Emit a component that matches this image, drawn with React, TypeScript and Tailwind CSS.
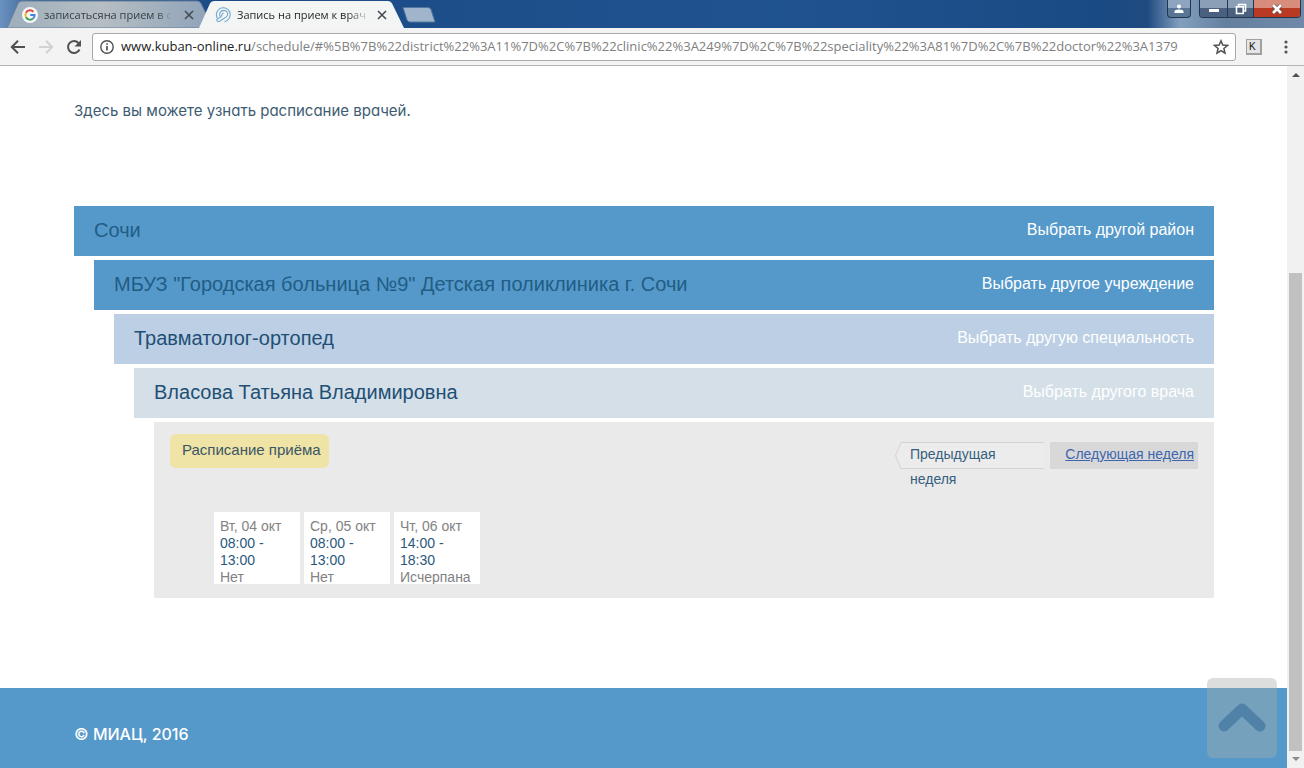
import React from "react";

type Crumb = { title: string; action: string; row: string; titleColor: string };

const crumbs: Crumb[] = [
  { title: "Сочи", action: "Выбрать другой район", row: "bg-[#5599ca]", titleColor: "text-[#215d85]" },
  { title: 'МБУЗ "Городская больница №9" Детская поликлиника г. Сочи', action: "Выбрать другое учреждение", row: "ml-5 bg-[#5599ca]", titleColor: "text-[#215d85]" },
  { title: "Травматолог-ортопед", action: "Выбрать другую специальность", row: "ml-10 bg-[#bccfe4]", titleColor: "text-[#1f4f76]" },
  { title: "Власова Татьяна Владимировна", action: "Выбрать другого врача", row: "ml-15 bg-[#d4dfe7]", titleColor: "text-[#1f4f76]" },
];

const days = [
  { date: "Вт, 04 окт", from: "08:00", to: "13:00", status: "Нет" },
  { date: "Ср, 05 окт", from: "08:00", to: "13:00", status: "Нет" },
  { date: "Чт, 06 окт", from: "14:00", to: "18:30", status: "Исчерпана" },
];

function CloseIcon() {
  return (
    <svg viewBox="0 0 10 10" className="size-[10px]" fill="none" stroke="#444b52" strokeWidth="1.6">
      <path d="M1 1l8 8M9 1l-8 8" />
    </svg>
  );
}

function GoogleIcon() {
  return (
    <svg viewBox="0 0 16 16" className="size-4 shrink-0">
      <circle cx="8" cy="8" r="8" fill="#f6f7f8" />
      <g fill="none" strokeWidth="2">
        <path d="M11.4 4.7A4.6 4.6 0 0 0 4 5.8" stroke="#e0483b" />
        <path d="M4 5.8a4.6 4.6 0 0 0 0 4.5" stroke="#efb92a" />
        <path d="M4 10.3a4.6 4.6 0 0 0 7.2 1.1" stroke="#3da35a" />
        <path d="M11.2 11.4A4.6 4.6 0 0 0 12.6 8H8.2" stroke="#4a80dd" />
      </g>
    </svg>
  );
}

function ClinicIcon() {
  return (
    <svg viewBox="0 0 16 16" className="size-4 shrink-0" fill="none" stroke="#6fa9d2" strokeWidth="1.1">
      <path d="M2.500 11.500A7 7 0 0 1 8 .8a6.800 6.800 0 0 1 7.200 6.800c0 3.500-2.600 6.300-5.700 7.300" />
      <path d="M5 9.500C3.700 6.500 5.600 3.500 8.800 3.400c2.800 0 4.300 2.400 3.800 4.600C12 11 7.800 11.200 5.200 13.800c-1.600 1.400-3.600.6-3.500-.9.100-1.700 2.700-1.500 4.300-3.200C7.300 8.200 6.500 6.500 8.500 6" />
    </svg>
  );
}

function BrowserTab({ active, label, icon }: { active?: boolean; label: string; icon: React.ReactNode }) {
  return (
    <div className={active ? "relative z-10 -ml-[14px] h-7 w-[205px]" : "relative h-7 w-[206px]"}>
      <svg viewBox="0 0 206 28" preserveAspectRatio="none" className="absolute inset-0 size-full">
        <defs>
          <linearGradient id="idleTab">
            <stop offset="0" stopColor="#9daebb" />
            <stop offset=".45" stopColor="#b6bec3" />
            <stop offset="1" stopColor="#8ea2b9" />
          </linearGradient>
        </defs>
        <path
          d="M0 28L11 3.500Q12 1 15 1H190Q193 1 194 3.500L206 28Z"
          fill={active ? "#f3f4f4" : "url(#idleTab)"}
          stroke={active ? "none" : "#647e99"}
        />
      </svg>
      <div className={active ? "relative flex h-7 items-center pt-[2px] pr-[17px] pl-4" : "relative flex h-7 items-center pt-[2px] pr-[19px] pl-[15px]"}>
        {icon}
        <button
          className={
            active
              ? "ml-1.5 bg-gradient-to-r from-[#222] from-85% to-[#cccccc] bg-clip-text text-left text-[11px] whitespace-nowrap text-transparent"
              : "ml-1.5 bg-gradient-to-r from-[#333a40] from-88% to-[#a3afba] bg-clip-text text-left text-[11px] whitespace-nowrap text-transparent"
          }
        >
          {label}
        </button>
        <button aria-label="Закрыть вкладку" className="ml-auto">
          <CloseIcon />
        </button>
      </div>
    </div>
  );
}

function TitleBar() {
  return (
    <header className="flex h-7 shrink-0 justify-between bg-[linear-gradient(90deg,#6b91bf_0,#315e93_40px,#1b4b86_220px,#1f5390_60%,#1a4a83_85%,#204b80_88%,#829fc0_90.5%,#65809f_94%,#7089a8_100%)]">
      <div className="flex pl-[7px]">
        <BrowserTab label="записатьсяна прием в с" icon={<GoogleIcon />} />
        <BrowserTab active label="Запись на прием к врач" icon={<ClinicIcon />} />
        <button aria-label="Новая вкладка" className="-ml-[2px] flex items-center pt-[2px]">
          <svg viewBox="0 0 34 16" className="h-4 w-[34px]">
            <path d="M1 .5h25q2 0 3 2L33 15H8q-2 0-3-2Z" fill="#a0b5cc" stroke="#52749d" />
          </svg>
        </button>
      </div>
      <div className="flex h-[18px] items-stretch gap-2 pr-[3px]">
        <button aria-label="Профиль" className="flex w-6 items-center justify-center rounded-b border border-t-0 border-[#24364f] bg-gradient-to-b from-[#8ea5bf] from-50% to-[#587594] to-50%">
          <svg viewBox="0 0 10 10" className="size-[10px]" fill="#fff">
            <circle cx="5" cy="2.500" r="2" />
            <path d="M.5 9V7.500Q.5 5.500 5 5.500t4.500 2V9Z" />
          </svg>
        </button>
        <div className="flex overflow-hidden rounded-b border border-t-0 border-[#24364f]">
          <button aria-label="Свернуть" className="flex w-7 items-center justify-center border-r border-[#24364f] bg-gradient-to-b from-[#8b9fb7] from-50% to-[#49617f] to-50% pt-1">
            <span className="h-[3px] w-[10px] bg-white" />
          </button>
          <button aria-label="Свернуть в окно" className="flex w-[26px] items-center justify-center border-r border-[#24364f] bg-gradient-to-b from-[#8b9fb7] from-50% to-[#49617f] to-50%">
            <svg viewBox="0 0 12 12" className="size-3" fill="none" stroke="#fff" strokeWidth="1.6">
              <path d="M3.500 3V1.500h7v6.500H9" />
              <path d="M1.500 3.800h6.700v6.700H1.500z" />
            </svg>
          </button>
          <button aria-label="Закрыть" className="flex w-[46px] items-center justify-center bg-gradient-to-b from-[#d88c7c] from-50% to-[#b83a22] to-50%">
            <svg viewBox="0 0 12 10" className="h-[10px] w-3" fill="none">
              <path d="M2 1l8 8M10 1l-8 8" stroke="#5d3a3a" strokeWidth="4" />
              <path d="M2 1l8 8M10 1l-8 8" stroke="#fff" strokeWidth="2.800" />
            </svg>
          </button>
        </div>
      </div>
    </header>
  );
}

function Toolbar() {
  return (
    <nav className="flex h-[38px] shrink-0 items-center border-b border-[#b4b4b4] bg-[#f3f3f3] pr-[15px] pl-[10px]">
      <button aria-label="Назад" className="mr-3">
        <svg viewBox="0 0 16 16" className="size-4" fill="none" stroke="#505050" strokeWidth="2">
          <path d="M15 8H2.500M8 1.800L1.800 8 8 14.200" />
        </svg>
      </button>
      <button aria-label="Вперёд" className="mr-3">
        <svg viewBox="0 0 16 16" className="size-4" fill="none" stroke="#d2d2d2" strokeWidth="2">
          <path d="M1 8h12.500M8 1.800L14.200 8 8 14.200" />
        </svg>
      </button>
      <button aria-label="Обновить" className="mr-2.5">
        <svg viewBox="0 0 16 16" className="size-4">
          <path d="M13.500 10.500A6 6 0 1 1 12.500 4" fill="none" stroke="#505050" strokeWidth="2" />
          <path d="M15 1v6.500H8.500Z" fill="#505050" />
        </svg>
      </button>
      <div className="flex h-7 min-w-0 flex-1 items-center rounded-[3px] border border-[#a9a9a9] bg-white pr-1.5 pl-[7px]">
        <svg viewBox="0 0 14 14" className="size-[14px] shrink-0" fill="none" stroke="#505050" strokeWidth="1.4">
          <circle cx="7" cy="7" r="6.200" />
          <path d="M7 6v4.500M7 3.300v1.500" strokeWidth="1.700" />
        </svg>
        <a
          href="#schedule"
          className="ml-[7px] min-w-0 flex-1 overflow-hidden text-[13px] whitespace-nowrap text-[#808080]"
        >
          <span className="text-[#222]">www.kuban-online.ru</span>
          /schedule/#%5B%7B%22district%22%3A11%7D%2C%7B%22clinic%22%3A249%7D%2C%7B%22speciality%22%3A81%7D%2C%7B%22doctor%22%3A1379
        </a>
        <button aria-label="Добавить в закладки" className="ml-1.5">
          <svg viewBox="0 0 16 16" className="size-4" fill="none" stroke="#505050" strokeWidth="1.500">
            <path d="M8 1.800l1.800 4.300 4.700.4-3.600 3 1.100 4.600-4-2.500-4 2.500 1.100-4.600-3.600-3 4.700-.4z" />
          </svg>
        </button>
      </div>
      <button
        aria-label="Расширение"
        className="ml-[10px] flex h-4 w-4 items-start justify-start border border-r-2 border-b-2 border-[#a0a0a0] bg-[#e4e4e4] pl-[2px] font-['Liberation_Sans'] text-[10px] leading-[13px] text-[#111]"
      >
        K
      </button>
      <button aria-label="Меню" className="ml-[21px]">
        <svg viewBox="0 0 6 14" className="h-[14px] w-1.5" fill="#555">
          <circle cx="3" cy="2" r="1.600" />
          <circle cx="3" cy="7" r="1.600" />
          <circle cx="3" cy="12" r="1.600" />
        </svg>
      </button>
    </nav>
  );
}

function Schedule() {
  return (
    <section className="ml-20 h-44 bg-[#eaeaea] px-4 pt-3">
      <div className="flex items-start justify-between">
        <h2 className="h-[34px] rounded-md bg-[#efe3a6] pr-2 pl-3 text-[15px] leading-8 text-[#3a5666]">Расписание приёма</h2>
        <div className="flex gap-1.5 pt-2 text-sm leading-[25px]">
          <div className="relative h-[27px] w-[149px]">
            <svg viewBox="0 0 149 27" className="absolute inset-0 size-full" fill="#ececec" stroke="#d2d2d2">
              <path d="M149 .5H6L.5 13.500 6 26.500H149" />
            </svg>
            <a href="#prev" className="relative block pr-10 pl-[15px] text-[#35607c]">
              Предыдущая неделя
            </a>
          </div>
          <a href="#next" className="h-[27px] w-[148px] bg-[#d8d8d8] pr-1 text-right text-[#3d66ae] underline">
            Следующая неделя
          </a>
        </div>
      </div>
      <ul className="-mt-px ml-11 flex gap-1 pt-11">
        {days.map((d) => (
          <li key={d.date} className="h-[72px] w-[86px] overflow-hidden bg-white px-1.5 pt-1.5 text-sm leading-[17px] text-[#828282]">
            <div>{d.date}</div>
            <div className="text-[#2b587c]">
              {d.from} -<br />
              {d.to}
            </div>
            <div>{d.status}</div>
          </li>
        ))}
      </ul>
    </section>
  );
}

function Scrollbar() {
  return (
    <div className="flex w-[17px] shrink-0 flex-col items-center bg-[#f1f1f1]">
      <svg viewBox="0 0 16 17" className="h-[17px] w-4" fill="#505050">
        <path d="M4 11h8L8 7Z" />
      </svg>
      <div className="flex w-full flex-1 flex-col justify-end px-[2px]">
        <div className="h-[71.500%] bg-[#c1c1c1]" />
      </div>
      <svg viewBox="0 0 16 17" className="h-[17px] w-4" fill="#8a8a8a">
        <path d="M4 6h8l-4 4Z" />
      </svg>
    </div>
  );
}

export default function App() {
  return (
    <div className="flex h-screen flex-col overflow-hidden bg-white font-['Open_Sans',sans-serif]">
      <TitleBar />
      <Toolbar />
      <div className="flex min-h-0 flex-1">
        <div className="relative flex min-w-0 flex-1 flex-col font-['Liberation_Sans',Arial,sans-serif]">
          <main className="flex-1 pt-8 pr-[73px] pl-[74px]">
            <p className="mb-[82px] font-['Inter',sans-serif] text-[15px] leading-[26px] text-[#3d5c72] [font-feature-settings:'cv11']">
              Здесь вы можете узнать расписание врачей.
            </p>
            <div className="flex flex-col gap-1">
              {crumbs.map((c) => (
                <div key={c.title} className={`flex h-[50px] items-center justify-between px-5 pb-[2px] ${c.row}`}>
                  <h1 className={`text-xl ${c.titleColor}`}>{c.title}</h1>
                  <a href="#choose" className="text-base text-white">
                    {c.action}
                  </a>
                </div>
              ))}
              <Schedule />
            </div>
          </main>
          <footer className="flex h-20 items-center bg-[#5599ca] px-[74px] pt-3 font-['Inter',sans-serif] text-base font-medium text-white">
            © МИАЦ, 2016
          </footer>
          <button
            aria-label="Наверх"
            className="absolute right-[10px] bottom-[10px] flex h-20 w-[70px] items-center justify-center rounded-md bg-[rgba(165,172,168,0.4)]"
          >
            <svg viewBox="0 0 50 32" className="h-8 w-[50px]" fill="none" stroke="#5082a8" strokeWidth="11" strokeLinecap="round" strokeLinejoin="round">
              <path d="M7 24L25 7l18 17" />
            </svg>
          </button>
        </div>
        <Scrollbar />
      </div>
    </div>
  );
}
